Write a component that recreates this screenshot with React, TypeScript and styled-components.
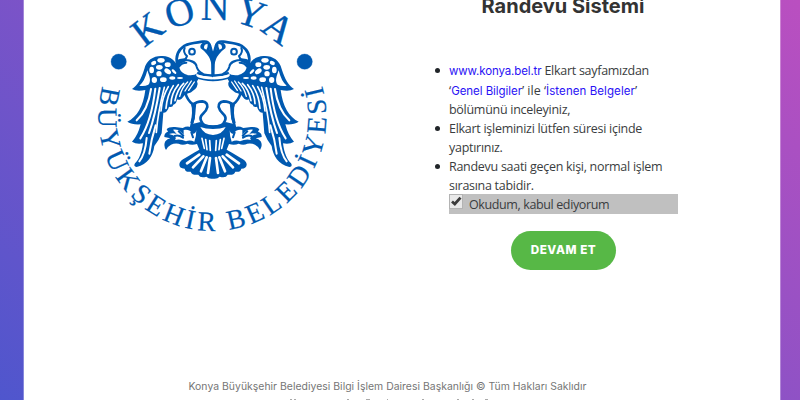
import React from "react";
import styled, { createGlobalStyle } from "styled-components";

const GlobalStyle = createGlobalStyle`
  * { box-sizing: border-box; }
  body { margin: 0; overflow: hidden; }
`;

const Page = styled.div`
  height: 400px;
  padding: 0 19px 0 23px;
  background: linear-gradient(217deg, #ba4fc0 0%, #4f56cd 100%);
  overflow: hidden;
`;

const Card = styled.main`
  height: 400px;
  background: #fff;
  background-clip: padding-box;
  border: solid rgba(255, 255, 255, 0.3);
  border-width: 0 1px;
  display: flex;
  flex-direction: column;
`;

const Columns = styled.div`
  display: flex;
  height: 370px;
`;

const LogoColumn = styled.div`
  width: 388px;
  padding-left: 61px;
`;

const Emblem = styled.svg`
  display: block;
  width: 260px;
  height: 240px;
  font-family: "Liberation Serif", serif;
`;

const InfoColumn = styled.section`
  width: 302px;
  display: flex;
  flex-direction: column;
  align-items: center;
`;

const Title = styled.h1`
  margin: -8px 0 0;
  height: 28px;
  font: 700 20px/28px Inter, sans-serif;
  color: #333;
  white-space: nowrap;
`;

const Rules = styled.ul`
  list-style: none;
  margin: 41px 0 0 37px;
  padding: 0;
  width: 229px;
  align-self: flex-start;
`;

const Rule = styled.li`
  position: relative;
  &::before {
    content: "";
    position: absolute;
    left: -14px;
    top: 7px;
    width: 5px;
    height: 5px;
    border-radius: 50%;
    background: #212529;
  }
`;

const Line = styled.div<{ $spacing?: number; $height?: number }>`
  height: ${(p) => p.$height ?? 19}px;
  line-height: 19px;
  font-family: "Open Sans", sans-serif;
  font-size: 12.5px;
  letter-spacing: ${(p) => p.$spacing ?? -0.28}px;
  color: #3a3d40;
  white-space: nowrap;
`;

const Link = styled.a<{ $spacing?: number }>`
  font-family: Inter, sans-serif;
  font-size: 11.5px;
  letter-spacing: ${(p) => p.$spacing ?? 0}px;
  color: #2a12f5;
`;

const Consent = styled.label`
  display: flex;
  align-items: flex-start;
  width: 229px;
  height: 20px;
  margin-top: -1px;
  background: #c0c0c0;
`;

const ConsentText = styled(Line)`
  padding-top: 1px;
`;

const CheckMark = styled.svg`
  width: 14px;
  height: 15px;
  margin-right: 6px;
`;

const Button = styled.button`
  width: 105px;
  height: 39px;
  margin: 17px 0 0 1px;
  padding: 0;
  border: 0;
  border-radius: 20px;
  background: #57b846;
  color: #fff;
  font: 800 11.7px/39px Inter, sans-serif;
  letter-spacing: 0.55px;
`;

const Footer = styled.footer`
  width: 727px;
  height: 30px;
  display: flex;
  flex-direction: column;
  align-items: center;
  justify-content: space-between;
  padding-top: 8px;
  font: 400 10.4px/17px Inter, sans-serif;
  letter-spacing: 0.03px;
  color: #757575;
  white-space: nowrap;
`;

const CutLine = styled.svg`
  display: block;
  width: 200px;
  height: 1px;
`;

const BLUE = "#0059b0";

function EagleHalf() {
  return (
    <g strokeLinecap="round" strokeLinejoin="round">
      {/* wing silhouette */}
      <path
        fill={BLUE}
        d="M141 267 C158 256 168 238 178 207 C184 180 207 166 233 168 C257 169 272 183 281 204 Q291 221 309 226 L335 229 L340 238 L336 244 Q341 253 335 262 Q330 270 324 272 Q318 279 310 280 L300 284 L290 296 Q281 302 276 298 Q275 312 265 314 Q263 323 252 320 Q247 338 235 338 L230 400 Q222 421 208 438 C204 468 188 493 155 501 Q144 500 150 490 C162 478 170 461 174 430 Q154 434 141 425 Q158 408 167 373 Q142 375 127 365 C156 351 175 319 181 270 Q155 276 141 267Z"
      />
      {/* talons and tail silhouette */}
      <path
        fill={BLUE}
        d="M384 376 L384 536 Q371 538 364 530 Q345 535 340 524 Q322 527 317 515 Q302 518 299 506 Q282 506 283 492 Q284 482 302 473 L327 458 L343 449 L336 432 Q320 437 307 431 Q293 437 281 431 Q268 429 258 434 Q248 439 243 450 Q234 436 241 424 Q247 416 256 415 L238 411 Q237 399 249 395 L245 388 Q251 380 270 381 L293 384 Q307 377 316 381 Q323 370 331 370 L346 366 Q360 376 384 376Z"
      />
      <g fill="#fff">
        <path d="M163 257 Q179 245 187 211 L193 228 Q198 247 190 254 Q178 260 163 257Z" />
        <ellipse cx="206" cy="189" rx="8" ry="6" transform="rotate(-25 206 189)" />
        <ellipse cx="228" cy="181" rx="11" ry="7" />
        <ellipse cx="200" cy="210" rx="7" ry="10" />
        <ellipse cx="223" cy="202" rx="10" ry="7" />
        <ellipse cx="248" cy="194" rx="9" ry="7" />
        <ellipse cx="222" cy="221" rx="8" ry="8" />
        <ellipse cx="248" cy="214" rx="11" ry="7" transform="rotate(35 248 214)" />
        <ellipse cx="208" cy="240" rx="8" ry="9" />
        <ellipse cx="235" cy="239" rx="10" ry="7" />
        <ellipse cx="267" cy="215" rx="9" ry="4" transform="rotate(45 267 215)" />
        <ellipse cx="262" cy="234" rx="9" ry="5" />
        <ellipse cx="285" cy="234" rx="9" ry="3" />
      </g>
      {/* head */}
      <path
        fill="#fff"
        stroke={BLUE}
        strokeWidth="8"
        d="M277 194 C271 170 276 152 299 137 C317 128 338 128 353 125 Q371 122 375 137 L384 170 L384 228 L341 222 Q329 232 307 229 Q286 224 280 207Z"
      />
      <path d="M273 198 Q270 180 284 177 L303 174 L304 183 L287 191 L283 199Z" fill={BLUE} />
      <path
        fill="none"
        stroke={BLUE}
        strokeWidth="6"
        d="M299 144 Q293 157 306 168 L302 177 M299 179 C316 181 333 184 335 200 Q338 213 353 221 M283 199 Q290 188 304 188"
      />
      <path d="M355 127 Q343 135 347 145 Q355 150 366 163 Q377 176 379 194 L380 228 L384 228 L384 160 L374 148 L377 132Z" fill={BLUE} />
      <path d="M357 145 Q356 132 368 132 Q369 142 364 149Z" fill="#fff" />
      <circle cx="321" cy="155" r="8.5" fill="#fff" stroke={BLUE} strokeWidth="6" />
      {/* collar */}
      <path d="M334 221 Q353 230 384 230 L384 238 Q354 238 334 228" fill="#fff" />
      <path
        d="M339 218 Q356 226 384 226 M330 231 Q355 241 384 241"
        fill="none"
        stroke={BLUE}
        strokeWidth="5"
      />
      {/* leg */}
      <path
        fill="none"
        stroke={BLUE}
        strokeWidth="8"
        d="M301 279 Q307 300 323 313 Q329 335 325 352 L318 384 M323 315 Q335 304 352 304 Q368 306 367 321 Q365 331 354 341 Q343 351 348 362 Q354 380 384 381"
      />
      <path d="M318 308 L334 308 L331 338 Q331 356 324 372 L316 368 Q325 340 318 308Z" fill={BLUE} />
      <g fill="#fff">
        <path d="M346 381 Q361 387 384 387 L384 405 Q357 404 346 381Z" />
        <path d="M334 390 Q334 411 328 425 Q315 419 303 424 Q286 416 270 420 Q277 413 264 406 L252 402 Q265 397 275 402 L264 389 Q279 387 288 396 L296 404 L296 390 Q315 387 323 402 Q333 401 334 390Z" />
      </g>
      <path d="M269 408 Q280 404 294 413 M281 394 L295 407 M319 397 L324 412" stroke={BLUE} strokeWidth="6" fill="none" />
      {/* flight feathers */}
      <g fill="none" stroke="#fff" strokeWidth="6">
        <path d="M198 267 Q189 330 155 361" />
        <path d="M211 266 Q199 365 166 415" />
        <path d="M224 264 Q210 350 192 399" />
        <path d="M185 414 Q181 462 163 484" />
        <path d="M212 376 Q198 419 193 461" />
        <path d="M238 262 Q218 340 214 397" strokeWidth="5" />
        <path d="M250 260 Q231 292 228 333" strokeWidth="5" />
        <path d="M265 257 Q246 286 243 325" strokeWidth="5" />
        <path d="M280 254 Q259 280 258 311" strokeWidth="5" />
        <path d="M296 250 Q277 267 270 302" strokeWidth="5" />
        <path d="M308 246 Q291 262 284 289" strokeWidth="4" />
        <path d="M319 243 L300 273 M328 246 L311 271" strokeWidth="4" />
      </g>
      {/* tail */}
      <g fill="none" stroke="#fff" strokeWidth="5">
        <path d="M351 415 L358 445 M362 419 L366 449 M374 422 L376 451" />
        <path d="M343 464 L306 490 M355 469 L324 502" strokeWidth="8" />
        <path d="M365 472 L348 514 M375 474 L369 519" strokeWidth="8" />
      </g>
    </g>
  );
}

function MunicipalEmblem() {
  return (
    <Emblem viewBox="0 0 780 720" overflow="visible" aria-label="Konya Büyükşehir Belediyesi">
      <defs>
        <path id="upper" d="M179 147 A290 290 0 0 1 597 150" />
        <path id="lower" d="M53 258 A342 342 0 1 0 713 264" />
      </defs>
      <g fill={BLUE} stroke={BLUE}>
        <text fontSize="119" strokeWidth="1">
          <textPath href="#upper" textLength="457">KONYA</textPath>
        </text>
        <text fontSize="83" strokeWidth="0.6">
          <textPath href="#lower" textLength="640">BÜYÜKŞEHİR</textPath>
        </text>
        <text fontSize="83" strokeWidth="0.6">
          <textPath href="#lower" startOffset="681" textLength="582">BELEDİYESİ</textPath>
        </text>
        <circle cx="101" cy="185" r="23" />
        <circle cx="659" cy="185" r="23" />
      </g>
      <EagleHalf />
      <g transform="translate(768 0) scale(-1 1)">
        <EagleHalf />
      </g>
    </Emblem>
  );
}

export default function App() {
  return (
    <>
      <GlobalStyle />
      <Page>
        <Card>
          <Columns>
            <LogoColumn>
              <MunicipalEmblem />
            </LogoColumn>
            <InfoColumn>
              <Title>Randevu Sistemi</Title>
              <Rules>
                <Rule>
                  <Line $height={20}>
                    <Link $spacing={-0.12}>www.konya.bel.tr</Link> Elkart sayfamızdan
                  </Line>
                  <Line $spacing={0}>
                    ‘<Link $spacing={-0.05}>Genel Bilgiler</Link>’ ile ‘<Link $spacing={0.08}>İstenen Belgeler</Link>’
                  </Line>
                  <Line>bölümünü inceleyiniz,</Line>
                </Rule>
                <Rule>
                  <Line>Elkart işleminizi lütfen süresi içinde</Line>
                  <Line>yaptırınız.</Line>
                </Rule>
                <Rule>
                  <Line>Randevu saati geçen kişi, normal işlem</Line>
                  <Line>sırasına tabidir.</Line>
                </Rule>
                <Consent>
                  <CheckMark viewBox="0 0 14 15">
                    <rect x=".5" y=".5" width="13" height="14" fill="#e9e9e9" stroke="#b3b3b3" />
                    <path d="M3 7.5 L5.8 10 L11.5 3.6" fill="none" stroke="#3b3b3b" strokeWidth="2.8" />
                  </CheckMark>
                  <ConsentText $spacing={-0.38}>Okudum, kabul ediyorum</ConsentText>
                </Consent>
              </Rules>
              <Button>DEVAM ET</Button>
            </InfoColumn>
          </Columns>
          <Footer>
            <span>Konya Büyükşehir Belediyesi Bilgi İşlem Dairesi Başkanlığı © Tüm Hakları Saklıdır</span>
            <CutLine viewBox="0 0 200 1">
              <path
                d="M2 .5h2m2 0h2M59 .5h2M78 .5h4M99 .5h1M134 .5h2M169 .5h2M184 .5h2M197 .5h3"
                stroke="#aaa"
                strokeWidth="1"
              />
            </CutLine>
          </Footer>
        </Card>
      </Page>
    </>
  );
}
